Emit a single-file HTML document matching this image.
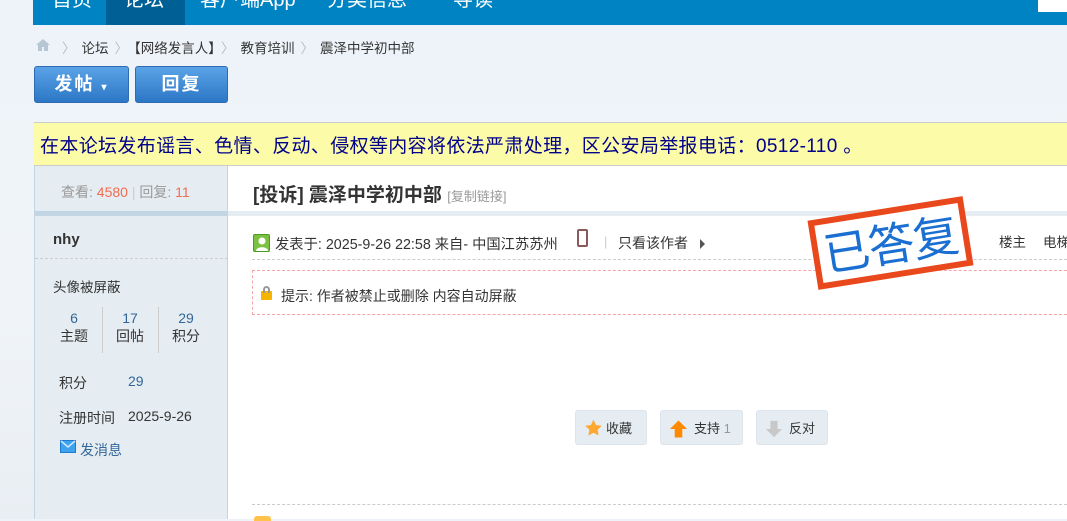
<!DOCTYPE html>
<html><head><meta charset="utf-8"><style>
*{margin:0;padding:0;box-sizing:border-box}
body{width:1067px;height:519px;overflow:hidden;position:relative;font-family:"Liberation Sans","Noto Sans CJK SC",sans-serif;font-size:13px;color:#333;background:linear-gradient(180deg,#eef3f9 0%,#f0f4f8 60%,#e9eef3 100%)}
.a{position:absolute;white-space:nowrap}
.nav{position:absolute;left:33px;top:0;width:1034px;height:25px;background:#0083c3}
.nav span{position:absolute;top:-12px;font-size:20px;color:#fff;line-height:24px}
.btn{position:absolute;top:66px;height:37px;border:1px solid #2e6bb0;border-radius:3px;background:linear-gradient(#5ba3e6,#2c77c6);color:#fff;font-size:18px;font-weight:bold;line-height:35px;text-align:center;letter-spacing:2px}
.stat{text-align:center;color:#333;font-size:14px}
.stat b{display:block;font-weight:normal;color:#369}
.pb{position:absolute;top:410px;height:35px;border:1px solid #dde4eb;border-radius:3px;background:#e5edf2;font-size:13px;line-height:35px;color:#333}
.sep{color:#bbb;margin:0 6px}
</style></head><body>
<div class="nav">
<span style="left:19px">首页</span>
<div style="position:absolute;left:73px;top:0;width:79px;height:25px;background:#005f94"></div>
<span style="left:91px">论坛</span>
<span style="left:167px">客户端App</span>
<span style="left:294px">分类信息</span>
<span style="left:420px">导读</span>
<div style="position:absolute;left:1005px;top:0;width:29px;height:12px;background:#fff"></div>
</div>
<svg class="a" style="left:35px;top:38px" width="16" height="14" viewBox="0 0 16 14"><path d="M8 1L1 7h2v6h4V9h2v4h4V7h2z" fill="#b7c6d3"/></svg>
<div class="a" style="left:56px;top:37px;font-size:13.5px;color:#333"><span class="sep">〉</span>论坛<span class="sep">〉</span>【网络发言人】<span class="sep">〉</span>教育培训<span class="sep">〉</span>震泽中学初中部</div>
<div class="btn" style="left:34px;width:95px">发帖 <span style="font-size:10px">▾</span></div>
<div class="btn" style="left:135px;width:93px">回复</div>
<div class="a" style="left:34px;top:122px;width:1033px;height:44px;background:#fbfba8;border-top:1px solid #ccc;border-bottom:1px solid #ccc"></div>
<div class="a" style="left:40px;top:131px;font-size:19px;color:#00008b;letter-spacing:0.35px">在本论坛发布谣言、色情、反动、侵权等内容将依法严肃处理，区公安局举报电话：0512-110 。</div>
<div class="a" style="left:34px;top:166px;width:194px;height:353px;background:#e5edf2;border-left:1px solid #c2d5e3;border-right:1px solid #c2d5e3"></div>
<div class="a" style="left:228px;top:166px;width:839px;height:353px;background:#fff"></div>
<div class="a" style="left:61px;top:182px;font-size:14px;color:#999">查看: <span style="color:#f26c4f">4580</span> <span style="color:#ccc">|</span> 回复: <span style="color:#f26c4f">11</span></div>
<div class="a" style="left:35px;top:211px;width:193px;height:5px;background:#c2d5e3"></div>
<div class="a" style="left:228px;top:211px;width:839px;height:5px;background:#e5edf2"></div>
<div class="a" style="left:253px;top:180px;font-size:19px;font-weight:bold;color:#333">[投诉] 震泽中学初中部 <span style="font-size:13px;font-weight:normal;color:#999">[复制链接]</span></div>
<div class="a" style="left:53px;top:231px;font-size:15px;font-weight:bold;color:#333">nhy</div>
<div class="a" style="left:35px;top:258px;width:193px;border-top:1px dashed #cdcdcd"></div>
<div class="a" style="left:53px;top:276px;font-size:13.5px">头像被屏蔽</div>
<div class="a stat" style="left:54px;top:310px;width:40px"><b>6</b>主题</div>
<div class="a" style="left:102px;top:307px;height:46px;border-left:1px solid #ccc"></div>
<div class="a stat" style="left:110px;top:310px;width:40px"><b>17</b>回帖</div>
<div class="a" style="left:158px;top:307px;height:46px;border-left:1px solid #ccc"></div>
<div class="a stat" style="left:166px;top:310px;width:40px"><b>29</b>积分</div>
<div class="a" style="left:59px;top:373px;font-size:14px">积分</div>
<div class="a" style="left:128px;top:373px;font-size:14px;color:#369">29</div>
<div class="a" style="left:59px;top:408px;font-size:14px">注册时间</div>
<div class="a" style="left:128px;top:408px;font-size:14px">2025-9-26</div>
<div class="a" style="left:60px;top:440px;width:16px;height:13px;background:#3fa2ef;border:1px solid #1e7bd0"></div>
<svg class="a" style="left:60px;top:440px" width="16" height="13"><path d="M1 1L8 7L15 1" stroke="#cfe8ff" fill="none" stroke-width="1.5"/></svg>
<div class="a" style="left:80px;top:440px;font-size:14px;color:#369">发消息</div>
<div class="a" style="left:253px;top:234px;width:17px;height:18px;background:#7cc242;border:1px solid #4f9a1e;border-radius:2px"></div>
<svg class="a" style="left:254px;top:235px" width="16" height="17"><circle cx="8" cy="6" r="3.5" fill="#fff"/><path d="M2 16c0-5 12-5 12 0z" fill="#fff"/></svg>
<div class="a" style="left:275px;top:233px;font-size:14.3px">发表于: 2025-9-26 22:58 来自- 中国江苏苏州</div>
<div class="a" style="left:577px;top:229px;width:11px;height:18px;border:2px solid #8a5a5a;border-radius:2px"></div>
<div class="a" style="left:604px;top:234px;color:#ccc">|</div>
<div class="a" style="left:618px;top:233px;font-size:14px">只看该作者</div>
<div class="a" style="left:700px;top:239px;width:0;height:0;border-left:5px solid #555;border-top:5px solid transparent;border-bottom:5px solid transparent"></div>
<div class="a" style="left:999px;top:231px;font-size:13.5px">楼主</div>
<div class="a" style="left:1043px;top:231px;font-size:13.5px">电梯</div>
<div class="a" style="left:252px;top:259px;width:815px;border-top:1px dashed #ccc"></div>
<div class="a" style="left:252px;top:270px;width:830px;height:45px;border:1px dashed #f5a5a5"></div>
<div class="a" style="left:261px;top:291px;width:11px;height:9px;background:#f4b400;border-radius:1px"></div>
<div class="a" style="left:263px;top:286px;width:7px;height:7px;border:2px solid #999;border-bottom:0;border-radius:4px 4px 0 0"></div>
<div class="a" style="left:281px;top:286px;font-size:14px">提示: 作者被禁止或删除 内容自动屏蔽</div>
<div class="pb" style="left:575px;width:72px;padding-left:30px">收藏</div>
<svg class="a" style="left:584px;top:419px" width="19" height="18" viewBox="0 0 24 24"><path d="M12 1l3.4 7 7.6 1-5.5 5.3 1.3 7.7L12 18.4 5.2 22l1.3-7.7L1 9l7.6-1z" fill="#ffa830"/></svg>
<div class="pb" style="left:660px;width:83px;padding-left:33px">支持 <span style="color:#999">1</span></div>
<svg class="a" style="left:669px;top:420px" width="19" height="18" viewBox="0 0 20 18"><path d="M10 0L19 9H14V18H6V9H1z" fill="#ff8a00"/></svg>
<div class="pb" style="left:756px;width:72px;padding-left:32px">反对</div>
<svg class="a" style="left:765px;top:420px" width="18" height="18" viewBox="0 0 20 18"><path d="M10 18L19 9H14V0H6V9H1z" fill="#c8c8c8"/></svg>
<div class="a" style="left:252px;top:504px;width:815px;border-top:1px dashed #ccc"></div>
<div class="a" style="left:254px;top:516px;width:17px;height:5px;background:#ffc24a;border-radius:3px 3px 0 0"></div>
<div class="a" style="left:812px;top:208px;width:157px;height:70px;border:6px solid #e8481c;background:rgba(255,255,255,.9);transform:rotate(-9deg);transform-origin:center;text-align:center;line-height:56px;font-size:46px;color:#1a6fd0;font-family:'Noto Sans CJK SC',sans-serif;letter-spacing:-1px">已答复</div>
</body></html>
